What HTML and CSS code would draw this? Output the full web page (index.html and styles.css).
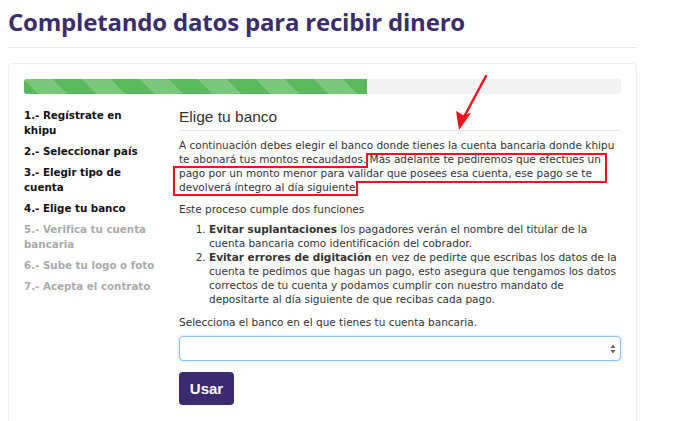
FILE: index.html
```html
<!DOCTYPE html>
<html lang="es">
<head>
<meta charset="utf-8">
<link rel="stylesheet" href="styles.css">
</head>
<body>
<div class="page">
  <h1 class="title">Completando datos para recibir dinero</h1>
  <hr class="title-rule">
  <div class="card">
    <div class="progress"><div class="progress-bar" style="width:57.4%"></div></div>
    <div class="row">
      <ul class="steps">
        <li class="done">1.- Regístrate en khipu</li>
        <li class="done">2.- Seleccionar país</li>
        <li class="done">3.- Elegir tipo de cuenta</li>
        <li class="done">4.- Elige tu banco</li>
        <li class="todo">5.- Verifica tu cuenta bancaria</li>
        <li class="todo">6.- Sube tu logo o foto</li>
        <li class="todo">7.- Acepta el contrato</li>
      </ul>
      <div class="main">
        <h2 class="section-title">Elige tu banco</h2>
        <p class="text first">A continuación debes elegir el banco donde tienes la cuenta bancaria donde khipu te abonará tus montos recaudados. Más adelante te pediremos que efectues un pago por un monto menor para validar que posees esa cuenta, ese pago se te devolverá íntegro al día siguiente.</p>
        <p class="text">Este proceso cumple dos funciones</p>
        <ol class="list">
          <li><b>Evitar suplantaciones</b> los pagadores verán el nombre del titular de la cuenta bancaria como identificación del cobrador.</li>
          <li><b>Evitar errores de digitación</b> en vez de pedirte que escribas los datos de la cuenta te pedimos que hagas un pago, esto asegura que tengamos los datos correctos de tu cuenta y podamos cumplir con nuestro mandato de depositarte al día siguiente de que recibas cada pago.</li>
        </ol>
        <p class="text select-label">Selecciona el banco en el que tienes tu cuenta bancaria.</p>
        <div class="select">
          <svg class="caret" width="6" height="10" viewBox="0 0 6 10"><path d="M0.5 4 L3 0.5 L5.5 4 Z M0.5 6 L3 9.5 L5.5 6 Z" fill="#666"/></svg>
        </div>
        <button class="btn">Usar</button>
      </div>
    </div>
  </div>
</div>
<svg class="annot" width="690" height="421" viewBox="0 0 690 421">
  <polygon points="174,167 367,167 367,154 606,154 606,182 357,182 357,195 174,195" fill="none" stroke="#f0141e" stroke-width="2"/>
  <line x1="486" y1="76" x2="464" y2="117" stroke="#f0141e" stroke-width="2.5" stroke-linecap="round"/>
  <polygon points="459,130 456,111 463,115 471,113" fill="#f0141e"/>
</svg>
</body>
</html>
```
FILE: styles.css
```css
* { box-sizing: border-box; }
body {
  margin: 0;
  background: #fff;
  font-family: "DejaVu Sans", Verdana, sans-serif;
  color: #333;
}
.page {
  width: 629px;
  margin-left: 8px;
}
.title {
  margin: 0;
  padding-top: 7px;
  font-family: "Open Sans", sans-serif;
  font-weight: 700;
  font-size: 24px;
  line-height: 30px;
  color: #3b2d6b;
  letter-spacing: -0.2px;
}
.title-rule {
  margin: 10px 0 15px;
  border: 0;
  border-top: 1px solid #e6e6e6;
}
.card {
  border: 1px solid #eee;
  border-radius: 4px;
  padding: 15px 15px 20px;
}
.progress {
  height: 15px;
  background: #f2f2f2;
  border-radius: 3px;
  overflow: hidden;
}
.progress-bar {
  height: 100%;
  background-color: #5cb85c;
  background-image: linear-gradient(45deg, rgba(255,255,255,.2) 25%, transparent 25%, transparent 50%, rgba(255,255,255,.2) 50%, rgba(255,255,255,.2) 75%, transparent 75%, transparent);
  background-size: 58px 58px;
}
.row {
  display: flex;
  gap: 22px;
  margin-top: 14px;
}
.steps {
  list-style: none;
  margin: 0;
  padding: 0;
  width: 133px;
  flex: none;
  font-size: 10.3px;
  font-weight: 700;
  line-height: 15px;
}
.steps li { margin-bottom: 6px; }
.steps .done { color: #111; }
.steps .todo { color: #aaa; }
.main { flex: 1; min-width: 0; }
.section-title {
  margin: 0;
  font-family: "Liberation Sans", Arial, sans-serif;
  font-weight: 400;
  font-size: 15.5px;
  line-height: 18px;
  color: #333;
  padding-bottom: 4px;
  border-bottom: 1px solid #e6e6e6;
}
.text {
  margin: 8px 0 0;
  font-size: 10.5px;
  line-height: 14px;
}
.text.first { margin-top: 7px; }
.list {
  margin: 6px 0 0;
  padding-left: 30px;
  font-size: 10.5px;
  line-height: 14px;
}
.list b { font-weight: 700; }
.select-label { margin-top: 9px; }
.select {
  position: relative;
  margin-top: 7px;
  height: 25px;
  border: 1px solid #8fc1ec;
  border-radius: 4px;
  box-shadow: 0 0 3px rgba(102,175,233,.5);
}
.caret { position: absolute; right: 4px; top: 7px; }
.btn {
  display: block;
  margin-top: 11px;
  width: 55px;
  height: 33px;
  border: 0;
  border-radius: 4px;
  background: #3b2a6e;
  color: #fff;
  font-family: "Liberation Sans", Arial, sans-serif;
  font-size: 15px;
  font-weight: 700;
}
.annot { position: absolute; left: 0; top: 0; pointer-events: none; }
```
